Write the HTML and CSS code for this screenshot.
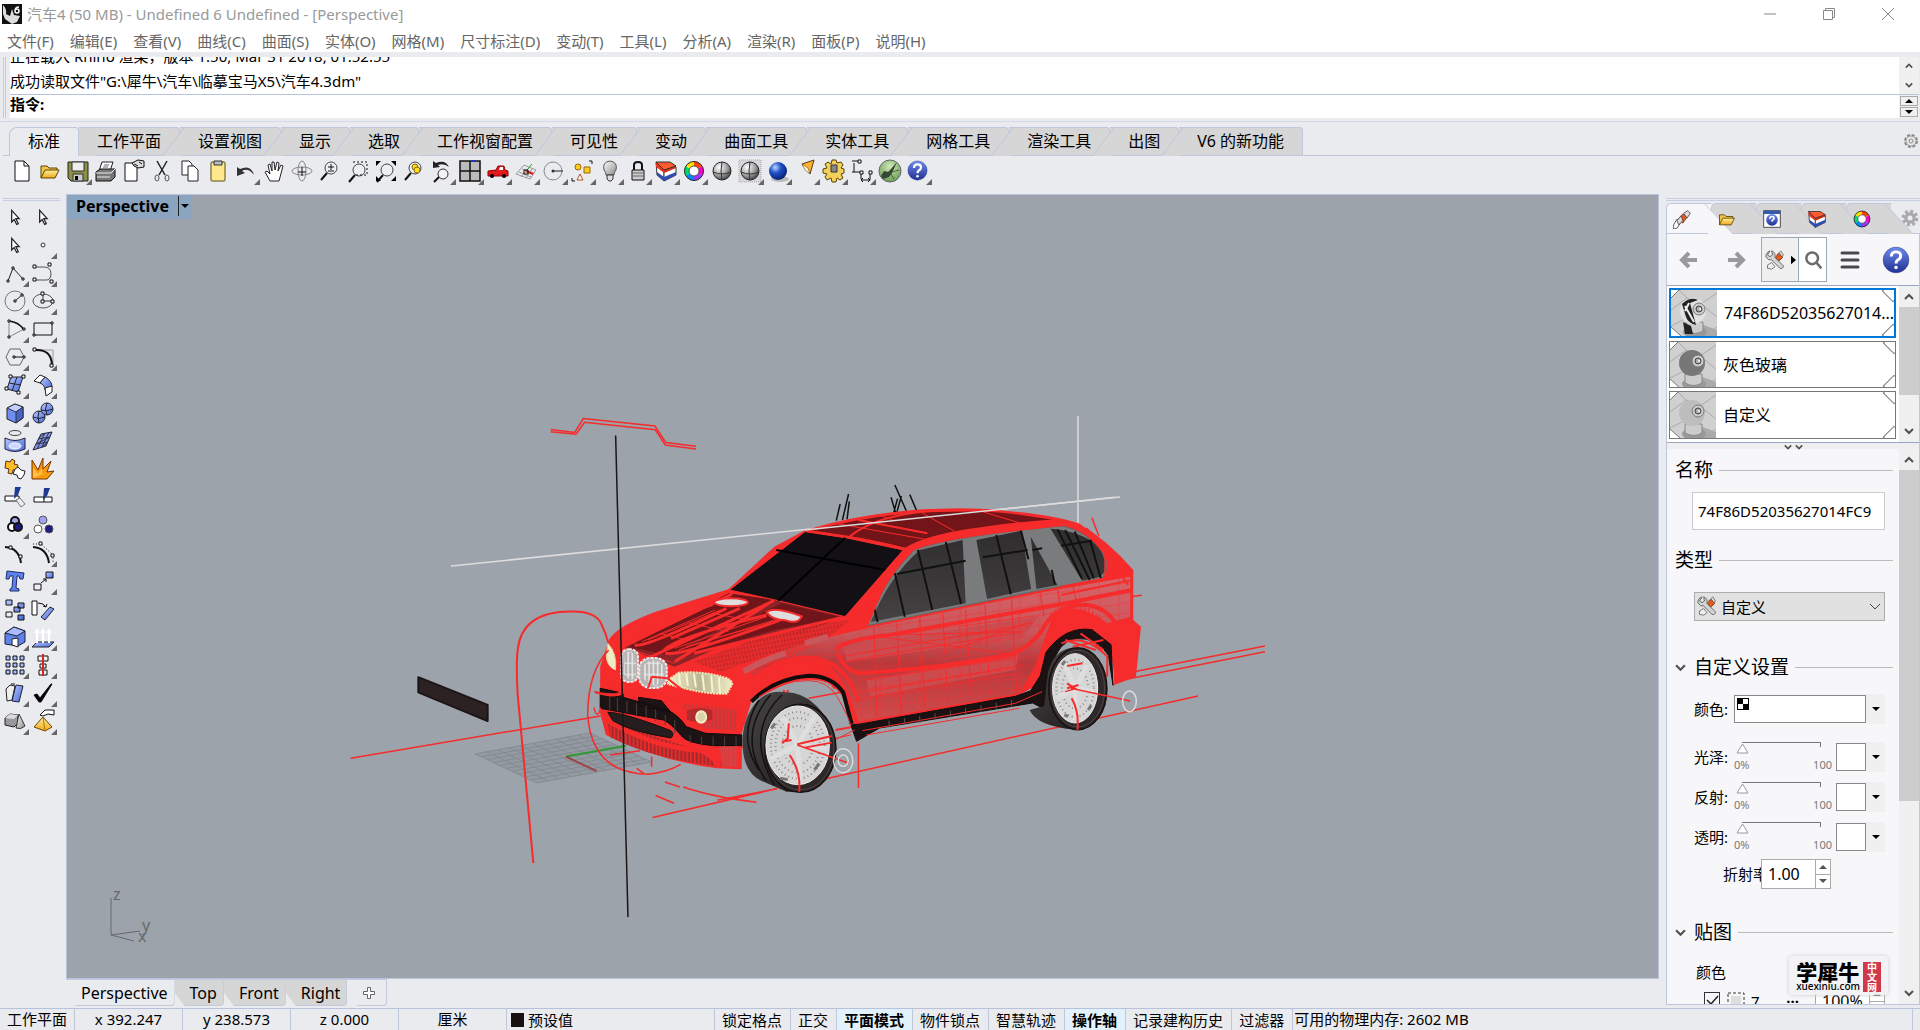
FILE: index.html
```html
<!DOCTYPE html>
<html lang="zh-CN">
<head>
    <meta charset="UTF-8">
    <meta name="viewport" content="width=device-width, initial-scale=1.0">
    <title>汽车4 (50 MB) - Undefined 6 Undefined - [Perspective]</title>
    <link rel="stylesheet" href="styles.css">
</head>
<body>
    <!-- общие символы и градиенты -->
    <svg class="defs" width="0" height="0" aria-hidden="true">
        <defs>
            <linearGradient id="blue" x1="0" y1="0" x2="1" y2="1"><stop offset="0" stop-color="#b9c9ff"/><stop offset="1" stop-color="#4667d8"/></linearGradient>
            <linearGradient id="gold" x1="0" y1="0" x2="0" y2="1"><stop offset="0" stop-color="#fff0a0"/><stop offset="1" stop-color="#f0a818"/></linearGradient>
            <linearGradient id="metal" x1="0" y1="0" x2="1" y2="1"><stop offset="0" stop-color="#fff"/><stop offset="1" stop-color="#8a8a8a"/></linearGradient>
            <radialGradient id="ball" cx=".35" cy=".3" r=".8"><stop offset="0" stop-color="#fff"/><stop offset=".5" stop-color="#aaa"/><stop offset="1" stop-color="#333"/></radialGradient>
            <radialGradient id="blueball" cx=".35" cy=".3" r=".8"><stop offset="0" stop-color="#bcd6ff"/><stop offset=".4" stop-color="#1e50c8"/><stop offset="1" stop-color="#031660"/></radialGradient>
            <linearGradient id="help" x1="0" y1="0" x2="0" y2="1"><stop offset="0" stop-color="#6e8cf0"/><stop offset="1" stop-color="#203090"/></linearGradient>
            <radialGradient id="green" cx=".5" cy=".3" r=".8"><stop offset="0" stop-color="#cfe8b8"/><stop offset="1" stop-color="#5c9048"/></radialGradient>
        </defs>
        <symbol id="arrow" viewBox="0 0 24 24"><path d="M8 4v14l3-3 3 6 2-1-3-6h4z" fill="#fff" stroke="#222" stroke-width="1.500"/></symbol>
        <symbol id="folder" viewBox="0 0 24 24"><path d="M3 19V7h6l2 2h8v4" fill="#f3c64a" stroke="#5b4300"/><path d="M3 19l4-8h14l-4 8z" fill="url(#gold)" stroke="#5b4300"/></symbol>
        <symbol id="layers" viewBox="0 0 24 24"><path d="M2 3l8 7v12l-7-6z" fill="#fff" stroke="#333"/><path d="M10 12l12-4v8l-12 6z" fill="#fff" stroke="#333"/><path d="M2 3l8 7v4L2 8z" fill="#e8351c"/><path d="M10 10l12-4v3l-12 5z" fill="#d82a18"/><path d="M2 3l14 0 6 4-12 4z" fill="#ff5a30" stroke="#333"/><path d="M3 13l7 5 12-5v3l-12 6-7-6z" fill="#2d4cb4"/></symbol>
        <symbol id="wheel" viewBox="0 0 24 24"><g fill="none" stroke-width="5"><path d="M12 5A7 7 0 0 1 18 8.500" stroke="#f40"/><path d="M18 8.500A7 7 0 0 1 18 15.500" stroke="#f0c"/><path d="M18 15.500A7 7 0 0 1 12 19" stroke="#93f"/><path d="M12 19A7 7 0 0 1 6 15.500" stroke="#08f"/><path d="M6 15.500A7 7 0 0 1 6 8.500" stroke="#0d6"/><path d="M6 8.500A7 7 0 0 1 12 5" stroke="#fd0"/></g><circle cx="12" cy="12" r="9.500" fill="none" stroke="#222"/><circle cx="12" cy="12" r="5" fill="#fff" stroke="#555"/></symbol>
        <symbol id="ask" viewBox="0 0 24 24"><circle cx="12" cy="12" r="11" fill="url(#help)" stroke="#27348a" stroke-width=".5"/><path d="M8 9q0-4 4-4t4 3.500q0 2-2.500 3.500-1.500 1-1.500 3" fill="none" stroke="#fff" stroke-width="2.500"/><circle cx="12" cy="18.500" r="1.500" fill="#fff"/></symbol>
        <symbol id="lens" viewBox="0 0 24 24"><path d="M9 14l-6 7" stroke="#111" stroke-width="2"/><circle cx="13" cy="9" r="6" fill="#eef2f4" fill-opacity=".7" stroke="#444"/></symbol>
        <symbol id="wrench" viewBox="0 0 24 24"><path d="M3 18l5-3 4 5-4 3-5-1z" fill="#eee" stroke="#666"/><path d="M19 1l3 5-3 5-5-5z" fill="#ddd" stroke="#666"/><path d="M13 8l4-4 4 5-4 4-4-3z" fill="#e65a1c" stroke="#7a2b08"/><path d="M6 1q-5 2-5 7 3 5 7 4l10 10q4 1 4-3L12 9Q13 3 8 1l1 5-3 2-3-2z" fill="#d4d4d6" stroke="#555"/></symbol>
        <symbol id="gear" viewBox="0 0 24 24"><circle cx="12" cy="12" r="8" fill="none" stroke-width="4" stroke-dasharray="3.600 2.680" stroke="currentColor"/><circle cx="12" cy="12" r="5" fill="none" stroke="currentColor" stroke-width="4"/></symbol>
        <symbol id="up" viewBox="0 0 10 10"><path d="M1 7l4-4 4 4" fill="none" stroke="#505050" stroke-width="2"/></symbol>
        <symbol id="down" viewBox="0 0 10 10"><path d="M1 3l4 4 4-4" fill="none" stroke="#505050" stroke-width="2"/></symbol>
        <symbol id="tri-up" viewBox="0 0 8 8"><path d="M0 6l4-4 4 4z"/></symbol>
        <symbol id="tri-down" viewBox="0 0 8 8"><path d="M0 2l4 4 4-4z"/></symbol>
        <symbol id="thumb" viewBox="0 0 46 46">
            <rect width="46" height="46" fill="#d0d0d0"/><path d="M0 20L16 8l14 6L46 3M0 36l12-6M30 14l16 13M34 46l12-9M8 0l8 8" stroke="#aaa" fill="none"/>
            <path d="M30 34l16 6v6H24z" fill="#aaa"/>
            <ellipse cx="24" cy="42" rx="12" ry="6" fill="#999"/><path d="M15 32h17v9q-8 5-17 0z" fill="#ccc" stroke="#888"/>
            <circle cx="22" cy="21" r="13" fill="currentColor"/>
            <circle cx="28" cy="19" r="6" fill="#ccc" stroke="#777"/><circle cx="28" cy="19" r="3" fill="#aaa" stroke="#444"/><circle cx="29" cy="19" r="1" fill="#fff"/>
            <path d="M0 0h8L0 8zM0 46h10L0 37z" fill="#fff"/><path d="M8 0L0 8M0 37l10 9" stroke="#777"/>
        </symbol>
    </svg>

    <header class="titlebar">
        <svg class="logo" viewBox="0 0 20 20"><rect width="20" height="20" fill="#111"/><path d="M1 1q4 4 3 9l4 2 2-7 2 6 6 1-3 6-5 2-7-5-2-5z" fill="#ddd"/><path d="M17 3q-4 0-4 4 0 2 2 2t2-2-2-2-2 1" fill="none" stroke="#fff" stroke-width="1.500"/></svg>
        <h1>汽车4 (50 MB) - Undefined 6 Undefined - [Perspective]</h1>
        <div class="window-buttons">
            <button aria-label="最小化"><svg viewBox="0 0 14 14"><path d="M1 7h12"/></svg></button>
            <button aria-label="还原"><svg viewBox="0 0 14 14"><path d="M1.500 3.500h9v9h-9zM3.500 3.500v-2h9v9h-2"/></svg></button>
            <button aria-label="关闭"><svg viewBox="0 0 14 14"><path d="M1 1l12 12M13 1L1 13"/></svg></button>
        </div>
    </header>

    <nav class="menu">
        <a href="#">文件(F)</a><a href="#">编辑(E)</a><a href="#">查看(V)</a><a href="#">曲线(C)</a><a href="#">曲面(S)</a><a href="#">实体(O)</a><a href="#">网格(M)</a><a href="#">尺寸标注(D)</a><a href="#">变动(T)</a><a href="#">工具(L)</a><a href="#">分析(A)</a><a href="#">渲染(R)</a><a href="#">面板(P)</a><a href="#">说明(H)</a>
    </nav>

    <section class="command">
        <div class="history">
            <div class="history-text">
                <p>正在载入 Rhino 渲染，版本 1.50, Mar 31 2018, 01:52:55</p>
                <p>成功读取文件"G:\犀牛\汽车\临摹宝马X5\汽车4.3dm"</p>
            </div>
            <div class="history-scroll"><svg><use href="#up"/></svg><svg><use href="#down"/></svg></div>
        </div>
        <div class="prompt">
            <label for="cmd">指令:</label>
            <input id="cmd" type="text">
            <div class="prompt-scroll">
                <button aria-label="上一条"><svg><use href="#tri-up"/></svg></button>
                <button aria-label="下一条"><svg><use href="#tri-down"/></svg></button>
            </div>
        </div>
    </section>

    <section class="toolbars">
        <div class="tabs">
            <button class="tab active">标准</button><button class="tab">工作平面</button><button class="tab">设置视图</button><button class="tab">显示</button><button class="tab">选取</button><button class="tab">工作视窗配置</button><button class="tab">可见性</button><button class="tab">变动</button><button class="tab">曲面工具</button><button class="tab">实体工具</button><button class="tab">网格工具</button><button class="tab">渲染工具</button><button class="tab">出图</button><button class="tab">V6 的新功能</button>
            <button class="tabs-gear" aria-label="选项"><svg viewBox="0 0 16 16"><circle cx="8" cy="8" r="6" fill="none" stroke="#888" stroke-width="2" stroke-dasharray="3 1.700"/><circle cx="8" cy="8" r="5" fill="#e8e8e8" stroke="#999"/><circle cx="8" cy="8" r="2" fill="none" stroke="#888"/></svg></button>
        </div>
        <div class="toolbar">
            <button class="tool" aria-label="新建"><svg viewBox="0 0 24 24"><path d="M5 2h9l5 5v15H5z" fill="#fff" stroke="#111"/><path d="M14 2v5h5" fill="none" stroke="#111"/></svg></button>
            <button class="tool" aria-label="打开"><svg><use href="#folder"/></svg></button>
            <button class="tool more" aria-label="保存"><svg viewBox="0 0 24 24"><path d="M2 3h20v19H5l-3-3z" fill="#8d8f45" stroke="#222"/><path d="M6 3h12v9H6z" fill="#eee" stroke="#333"/><path d="M7 15h10v7H7z" fill="#ccc" stroke="#333"/><path d="M9 17h3v4H9z"/></svg></button>
            <button class="tool" aria-label="打印"><svg viewBox="0 0 24 24"><path d="M8 3h11l-3 9H5z" fill="#fff" stroke="#222"/><path d="M2 13l4-3h15v8l-4 4H2z" fill="#777" stroke="#111"/><path d="M2 14h15l4-4M3 18h13" stroke="#eee" fill="none"/><path d="M10 6h5M9 8h5" stroke="#666"/></svg></button>
            <button class="tool" aria-label="属性"><svg viewBox="0 0 24 24"><path d="M3 4h12v18H3z" fill="#fff" stroke="#111"/><path d="M10 4l6-3 6 1v6l-6 1-4-2z" fill="#ddd" stroke="#111"/><path d="M12 5l4 2M17 3l3 2" stroke="#111"/></svg></button>
            <button class="tool" aria-label="剪切"><svg viewBox="0 0 24 24"><path d="M7 2l8 14M17 2L9 16" stroke="#222" stroke-width="1.500"/><ellipse cx="7" cy="19" rx="2" ry="3" fill="none" stroke="#555"/><ellipse cx="17" cy="19" rx="2" ry="3" fill="none" stroke="#555"/></svg></button>
            <button class="tool" aria-label="复制"><svg viewBox="0 0 24 24"><path d="M4 2h7l3 3v11H4z" fill="#fff" stroke="#222"/><path d="M10 7h6l4 4v11H10z" fill="#fff" stroke="#222"/></svg></button>
            <button class="tool" aria-label="粘贴"><svg viewBox="0 0 24 24"><rect x="5" y="3" width="14" height="19" rx="1" fill="#ffe98c" stroke="#5c4a10"/><path d="M8 2h8v4H8z" fill="#bbb" stroke="#333"/></svg></button>
            <button class="tool more" aria-label="撤销"><svg viewBox="0 0 24 24"><path d="M3 8v9l8-3-3-2q6-4 12 4-3-11-14-6z" fill="#333"/></svg></button>
            <button class="tool" aria-label="平移"><svg viewBox="0 0 24 24"><path d="M8 22l-5-9 2-1 3 3-2-9 2-1 2 7V3h2l1 8 2-8 2 1-1 8 3-6 2 1-4 15z" fill="#fff" stroke="#222"/></svg></button>
            <button class="tool" aria-label="旋转"><svg viewBox="0 0 24 24"><g fill="none" stroke="#888"><ellipse cx="12" cy="12" rx="10" ry="4"/><ellipse cx="12" cy="12" rx="4" ry="10"/></g><path d="M8 13h8M12 8v9" stroke="#111"/></svg></button>
            <button class="tool" aria-label="缩放"><svg viewBox="0 0 24 24"><use href="#lens"/><path d="M10 8h6M13 5v6M10 12h6" stroke="#111"/></svg></button>
            <button class="tool" aria-label="框选缩放"><svg viewBox="0 0 24 24"><use href="#lens" y="2"/><path d="M7 3h14v13H8" fill="none" stroke="#111" stroke-dasharray="2 2"/></svg></button>
            <button class="tool" aria-label="缩放至最大"><svg viewBox="0 0 24 24"><use href="#lens" y="2"/><path d="M2 2h5L2 7zM22 2v5l-5-5zM22 22v-5l-5 5zM2 22v-5l5 5z"/></svg></button>
            <button class="tool" aria-label="缩放选取"><svg viewBox="0 0 24 24"><use href="#lens"/><circle cx="13" cy="8" r="3" fill="#fd2" stroke="#860"/><circle cx="15" cy="11" r="3" fill="#fd2" stroke="#860"/></svg></button>
            <button class="tool more" aria-label="还原视图"><svg viewBox="0 0 24 24"><circle cx="13" cy="15" r="5" fill="#f4f4f4" stroke="#333"/><path d="M9 18l-5 5" stroke="#111" stroke-width="2"/><path d="M3 2v7l7-1-2-2q6-2 11 2-4-8-13-4z" fill="#222"/></svg></button>
            <button class="tool more" aria-label="四视图"><svg viewBox="0 0 24 24"><path d="M2 2h20v20H2zM12 2v20M2 12h20" fill="#bbb" stroke="#111" stroke-width="1.500"/><path d="M13 2h5" stroke="#23c" stroke-width="2"/></svg></button>
            <button class="tool more" aria-label="车"><svg viewBox="0 0 24 24"><path d="M2 12l8-1 2-4h6l1 4 3 1v5H2z" fill="#e01c1c" stroke="#900"/><path d="M13 11l1-3h3v3z" fill="#fff"/><circle cx="6" cy="17" r="2"/><circle cx="18" cy="17" r="2"/></svg></button>
            <button class="tool more" aria-label="工作平面"><svg viewBox="0 0 24 24"><path d="M2 15l8-9 12 5-6 9zM5 13l12 5M8 10l12 4M7 18l8-9M12 19l6-9" fill="none" stroke="#999"/><path d="M12 12l7 3" stroke="#d22" stroke-width="2"/><path d="M12 12l6-7" stroke="#2a2"/><path d="M10 11h4v4h-4z" fill="none" stroke="#111"/></svg></button>
            <button class="tool more" aria-label="圆"><svg viewBox="0 0 24 24"><circle cx="11" cy="12" r="9" fill="none" stroke="#888"/><path d="M10 12h11" stroke="#222"/><circle cx="11" cy="12" r="1.500" fill="#333"/></svg></button>
            <button class="tool more" aria-label="选取物件"><svg viewBox="0 0 24 24"><circle cx="8" cy="8" r="3" fill="#fc2" stroke="#960"/><path d="M14 8h6v6h-6z" fill="#fc2" stroke="#960"/><path d="M10 15l3 6H7z" fill="#fff" stroke="#a52"/><path d="M19 2h3v3M2 19v3h3" fill="none" stroke="#111"/></svg></button>
            <button class="tool more" aria-label="隐藏"><svg viewBox="0 0 24 24"><path d="M8 16q0-3-2-5-2-8 6-9 8 1 6 9-2 2-2 5z" fill="url(#metal)" stroke="#555"/><path d="M9 16h6v4l-2 2h-2l-2-2z" fill="#ddd" stroke="#333"/></svg></button>
            <button class="tool more" aria-label="锁定"><svg viewBox="0 0 24 24"><path d="M8 11V6q0-3 4-3t4 3v5" fill="none" stroke="#111" stroke-width="2"/><path d="M6 11h12v10H6z" fill="#ccc" stroke="#111"/><path d="M7 14h10M7 17h10" stroke="#666"/></svg></button>
            <button class="tool more" aria-label="图层"><svg><use href="#layers"/></svg></button>
            <button class="tool more" aria-label="颜色"><svg><use href="#wheel"/></svg></button>
            <button class="tool" aria-label="着色"><svg viewBox="0 0 24 24"><circle cx="12" cy="12" r="9" fill="url(#ball)" stroke="#222"/><path d="M3 13q9 4 18 0M12 3q-2 9 0 18" fill="none" stroke="#333"/></svg></button>
            <button class="tool more" aria-label="着色模式"><svg viewBox="0 0 24 24"><path d="M1 1h22v22H1z" fill="#d8d8da" stroke="#aaa" stroke-dasharray="1 1"/><circle cx="12" cy="12" r="9" fill="url(#ball)" stroke="#222"/><path d="M3 13q9 4 18 0M12 3q-2 9 0 18" fill="none" stroke="#333"/></svg></button>
            <button class="tool more" aria-label="渲染"><svg viewBox="0 0 24 24"><ellipse cx="14" cy="20" rx="9" ry="3" fill="#bbb"/><circle cx="12" cy="12" r="9" fill="url(#blueball)"/></svg></button>
            <button class="tool more" aria-label="灯光"><svg viewBox="0 0 24 24"><path d="M8 5l12-4-4 14z" fill="#ffb030" stroke="#543a10"/><path d="M8 5l3 6 5 4-2-6z" fill="#fff3c0" stroke="#543a10" stroke-width=".5"/></svg></button>
            <button class="tool more" aria-label="选项"><svg viewBox="0 0 24 24"><g stroke="#5c4100" fill="#f3d05c"><path d="M10 1h4l1 3 4-1 2 3-2 3 3 1v4l-3 1 2 4-3 2-3-2-1 4h-4l-1-4-4 2-2-3 2-3-4-1v-4l4-1-2-4 3-2 3 2z"/></g><path d="M9 6h6v7H9z" fill="#888" stroke="#333"/></svg></button>
            <button class="tool more" aria-label="尺寸"><svg viewBox="0 0 24 24"><path d="M2 2h8M4 4v9M2 13h9v7M20 13v8M11 21h9M13 19l-2 2 2 2M18 19l2 2-2 2" fill="none" stroke="#111"/><path d="M8 1h3v3H8zM10 12h3v3h-3zM19 12h3v3h-3z" fill="#fff" stroke="#111"/></svg></button>
            <button class="tool" aria-label="Grasshopper"><svg viewBox="0 0 24 24"><circle cx="12" cy="12" r="11" fill="url(#green)" stroke="#666"/><path d="M3 17l3-5 4 1 3-3 6-7-5 11-3 4-6 2z" fill="#354530"/><path d="M14 13l7-2M13 15l3 5" stroke="#476038"/></svg></button>
            <button class="tool more" aria-label="说明"><svg viewBox="0 0 24 24"><use href="#ask" x="1" y="1" width="21" height="21"/></svg></button>
        </div>
    </section>

    <main class="workspace">
        <aside class="side-tools">
            <button class="tool" aria-label="选取"><svg><use href="#arrow"/></svg></button>
            <button class="tool" aria-label="选取点"><svg><use href="#arrow"/></svg></button>
            <button class="tool" aria-label="子物件"><svg><use href="#arrow"/></svg></button>
            <button class="tool more" aria-label="点"><svg viewBox="0 0 24 24"><circle cx="12" cy="12" r="2" fill="#fff" stroke="#333"/></svg></button>
            <button class="tool more" aria-label="多重直线"><svg viewBox="0 0 24 24"><path d="M5 20l5-13 10 11" fill="none" stroke="#222"/><path d="M4 19h2v2H4zM9 6h2v2H9zM19 17h2v2h-2z" fill="#fff" stroke="#111"/></svg></button>
            <button class="tool more" aria-label="曲线"><svg viewBox="0 0 24 24"><path d="M4 6h9q7 0 7 7t-7 6H4" fill="none" stroke="#555"/><path d="M2 4h3v3H2zM17 2h3v3h-3zM2 17h3v3H2zM19 19h3v3h-3z" fill="#fff" stroke="#111"/></svg></button>
            <button class="tool more" aria-label="圆形"><svg viewBox="0 0 24 24"><circle cx="12" cy="12" r="10" fill="none" stroke="#777"/><path d="M12 12l7-6" stroke="#222"/><path d="M11 11h2v2h-2zM18 5h2v2h-2z" fill="#fff" stroke="#111"/></svg></button>
            <button class="tool more" aria-label="椭圆"><svg viewBox="0 0 24 24"><ellipse cx="12" cy="12" rx="10" ry="7" fill="none" stroke="#555"/><path d="M12 5v7h9" fill="none" stroke="#333"/><path d="M10 3h3v3h-3zM10 11h3v3h-3zM20 11h3v3h-3z" fill="#fff" stroke="#111"/></svg></button>
            <button class="tool more" aria-label="圆弧"><svg viewBox="0 0 24 24"><path d="M6 4q10 1 15 9" fill="none" stroke="#111" stroke-width="1.500"/><path d="M6 4v16l15-8" fill="none" stroke="#888"/><path d="M5 3h2v2H5zM5 19h2v2H5zM20 11h2v2h-2z" fill="#fff" stroke="#111"/></svg></button>
            <button class="tool more" aria-label="矩形"><svg viewBox="0 0 24 24"><path d="M3 6h18v12H3z" fill="none" stroke="#111"/><path d="M20 5h2v2h-2zM2 17h2v2H2z" fill="#fff" stroke="#111"/></svg></button>
            <button class="tool more" aria-label="多边形"><svg viewBox="0 0 24 24"><path d="M7 4h10l4 8-4 8H7l-4-8z" fill="none" stroke="#666"/><path d="M12 12h9" stroke="#111"/><path d="M10 11h2v2h-2zM20 11h2v2h-2z" fill="#fff" stroke="#111"/></svg></button>
            <button class="tool more" aria-label="圆角"><svg viewBox="0 0 24 24"><path d="M4 5h18v16" fill="none" stroke="#999"/><path d="M4 5q17-1 17 16" fill="none" stroke="#111" stroke-width="2"/><path d="M2 3h3v3H2zM19 19h3v3h-3z" fill="#fff" stroke="#111"/></svg></button>
            <button class="tool more" aria-label="曲面"><svg viewBox="0 0 24 24"><path d="M8 4h12l-5 15-11-3z" fill="url(#blue)" stroke="#223"/><path d="M6 10l12 2M14 4l-5 14" stroke="#223"/><path d="M6 2h3v3H6zM19 2h3v3h-3zM2 14h3v3H2zM14 18h3v3h-3z" fill="#fff" stroke="#111"/></svg></button>
            <button class="tool more" aria-label="放样"><svg viewBox="0 0 24 24"><path d="M3 8l6-6 5 2-5 6z" fill="#fff" stroke="#222"/><path d="M9 10l5-6q7 4 7 10l-7 3q0-5-5-7z" fill="url(#blue)" stroke="#223"/><path d="M14 15l7-2v6l-6 4z" fill="#fff" stroke="#222"/></svg></button>
            <button class="tool more" aria-label="立方体"><svg viewBox="0 0 24 24"><path d="M4 7l8-4 8 3v11l-7 5-9-4z" fill="#6f8ff0" stroke="#222"/><path d="M4 7l8-4 8 3-7 5z" fill="#c3cfff" stroke="#333"/><path d="M13 11v11l7-5V6z" fill="#4562cc" stroke="#333"/></svg></button>
            <button class="tool more" aria-label="球体"><svg viewBox="0 0 24 24"><circle cx="8" cy="16" r="6" fill="url(#blue)" stroke="#223"/><circle cx="16" cy="8" r="6" fill="url(#blue)" stroke="#223"/><path d="M10 9q6 2 12-1M16 2q-3 6 0 12M2 16q6 3 12 0M8 10q-2 6 0 12" fill="none" stroke="#223"/></svg></button>
            <button class="tool more" aria-label="投影"><svg viewBox="0 0 24 24"><ellipse cx="12" cy="4" rx="6" ry="2.500" fill="none" stroke="#444"/><path d="M2 9q10 5 20 0v11q-10 5-20 0z" fill="url(#blue)" stroke="#223"/><ellipse cx="12" cy="17" rx="6" ry="3" fill="#cdd8ff" stroke="#fff"/></svg></button>
            <button class="tool more" aria-label="网格"><svg viewBox="0 0 24 24"><path d="M10 5l11-2-6 14-13 4z" fill="url(#blue)" stroke="#223"/><path d="M7 10l12-2M5 15l12-2M14 4L6 20M18 3l-7 15M7 10l7-6M5 15l14-7M11 18l6-5" fill="none" stroke="#334"/></svg></button>
            <button class="tool" aria-label="组合"><svg viewBox="0 0 24 24"><path d="M3 4l4 1 2-3 3 2-1 3 4 1-1 4-4 1-1 4-4-1 1-4-4-1z" fill="#fb2" stroke="#532"/><path d="M12 12l3-2 3 3 4 1-1 4-3 4-3-1-1-3-4-1z" fill="#fff" stroke="#222"/></svg></button>
            <button class="tool" aria-label="炸开"><svg viewBox="0 0 24 24"><path d="M1 22V3l6 10L12 1v11l8-8-4 11 7-1-7 8z" fill="#f79a10" stroke="#7a3300"/><path d="M2 21V11l5 6 4-6v7l5-3z" fill="#ffc04a"/></svg></button>
            <button class="tool" aria-label="修剪"><svg viewBox="0 0 24 24"><path d="M2 11h14v5H2z" fill="#fff" stroke="#111"/><path d="M12 2h6l-3 8-4 4z" fill="#1f3a93"/><path d="M13 15l4-2 5 6-4 3z" fill="#eee" stroke="#777"/></svg></button>
            <button class="tool" aria-label="分割"><svg viewBox="0 0 24 24"><path d="M3 12h18v5H3z" fill="#fff" stroke="#111"/><path d="M13 3h6l-3 8-4 4z" fill="#1f3a93"/><path d="M13 12v5" stroke="#111"/></svg></button>
            <button class="tool more" aria-label="群组"><svg viewBox="0 0 24 24"><g stroke="#111" stroke-width="2"><circle cx="12" cy="8" r="4" fill="#a0a4ee"/><circle cx="9" cy="14" r="4" fill="#fff"/><circle cx="15" cy="14" r="4" fill="#1c1c80"/></g></svg></button>
            <button class="tool" aria-label="解散群组"><svg viewBox="0 0 24 24"><g stroke="#555"><circle cx="12" cy="7" r="4" fill="#a0a4ee"/><circle cx="7" cy="16" r="4" fill="#fff"/><circle cx="18" cy="16" r="4" fill="#1c1c80"/></g></svg></button>
            <button class="tool" aria-label="编辑点"><svg viewBox="0 0 24 24"><path d="M2 6q14 1 16 16" fill="none" stroke="#111" stroke-width="2"/><path d="M6 5h3v3H6zM16 14h3v3h-3z" fill="#fff" stroke="#111"/></svg></button>
            <button class="tool more" aria-label="控制点"><svg viewBox="0 0 24 24"><path d="M2 6q14 1 16 16" fill="none" stroke="#111" stroke-width="2"/><path d="M2 3h8l12 11v7" fill="none" stroke="#111" stroke-dasharray="1 2"/><path d="M8 1h3v3H8zM20 13h3v3h-3z" fill="#fff" stroke="#111"/></svg></button>
            <button class="tool" aria-label="文字"><svg viewBox="0 0 24 24"><path d="M4 2l17 2-1 6h-3l-1-3h-2l-1 12 3 1v2H7v-2l2-1 1-12H7l-1 3H3z" fill="#5f82ea" stroke="#1c2c68"/></svg></button>
            <button class="tool more" aria-label="移动"><svg viewBox="0 0 24 24"><path d="M15 3h7v6h-7z" fill="url(#blue)" stroke="#111"/><path d="M3 15h7v6H3z" fill="#eee" stroke="#111"/><path d="M10 14l5-4M12 10h3v3" fill="none" stroke="#111"/></svg></button>
            <button class="tool" aria-label="复制物件"><svg viewBox="0 0 24 24"><g fill="url(#blue)" stroke="#111"><path d="M3 3h6v5H3zM15 6h6v5h-6zM11 10h6v5h-6zM15 18h6v5h-6z"/></g><path d="M3 15h6v5H3z" fill="#eee" stroke="#111"/></svg></button>
            <button class="tool" aria-label="旋转物件"><svg viewBox="0 0 24 24"><path d="M1 4h5v14H1z" fill="#fff" stroke="#111"/><path d="M10 20l9-10 4 2-9 11z" fill="url(#blue)" stroke="#223"/><path d="M7 6q6 0 8 4M12 9l3 1 1-3" fill="none" stroke="#111"/></svg></button>
            <button class="tool more" aria-label="布尔"><svg viewBox="0 0 24 24"><path d="M2 8l9-6 11 4v11l-7 4-13-2z" fill="#5f82ea" stroke="#223"/><path d="M2 8l9-6 11 4-8 5z" fill="#a9bcff" stroke="#223"/><path d="M9 14l6-1v9l-6-2z" fill="#fff" stroke="#222"/></svg></button>
            <button class="tool more" aria-label="挤出"><svg viewBox="0 0 24 24"><path d="M6 17h17l-5 5H1z" fill="url(#blue)" stroke="#223"/><path d="M6 18V6M12 18V6M18 18V6M4 8l2-3 2 3M10 8l2-3 2 3M16 8l2-3 2 3" fill="none" stroke="#fff" stroke-width="2"/></svg></button>
            <button class="tool more" aria-label="阵列"><svg viewBox="0 0 24 24"><path d="M3 3h4v4H3zM10 3h4v4h-4zM17 3h4v4h-4zM3 10h4v4H3zM10 10h4v4h-4zM17 10h4v4h-4zM3 17h4v4H3zM10 17h4v4h-4zM17 17h4v4h-4z" fill="#a9bcff" stroke="#111"/></svg></button>
            <button class="tool more" aria-label="对齐"><svg viewBox="0 0 24 24"><path d="M7 3h10v5H7zM9 11h6v4H9zM8 17h8v5H8z" fill="#eee" stroke="#111"/><path d="M12 1v22" stroke="#d22" stroke-width="2"/></svg></button>
            <button class="tool more" aria-label="弯曲"><svg viewBox="0 0 24 24"><path d="M3 8l4-4 5 1-3 14-5 1z" fill="#eee" stroke="#222"/><path d="M13 4l7 1-4 16-7-1z" fill="url(#blue)" stroke="#223"/><path d="M8 3h4" stroke="#111"/></svg></button>
            <button class="tool more" aria-label="检查"><svg viewBox="0 0 24 24"><path d="M3 14l3-1 3 4L20 3h1L10 21H8z" stroke="#111"/></svg></button>
            <button class="tool more" aria-label="实体"><svg viewBox="0 0 24 24"><path d="M2 9l5-4 8 1v8l-4 4-9-2z" fill="#999" stroke="#222"/><path d="M2 9l5-4 8 1-4 4z" fill="#ddd"/><path d="M16 5l6 12q-4 4-9 2z" fill="url(#metal)" stroke="#333"/></svg></button>
            <button class="tool more" aria-label="拾取"><svg viewBox="0 0 24 24"><path d="M12 8l9 10-7 4-11-4z" fill="url(#gold)" stroke="#6a4500"/><path d="M12 8l2 14" stroke="#a70"/><path d="M9 6l5-5h9v5l-6-1-5 2z" fill="#fff" stroke="#111"/></svg></button>
        </aside>

        <section class="view">
            <div class="viewport">
                <svg class="scene" viewBox="67 195 1591 784" preserveAspectRatio="xMinYMin slice" role="img" aria-label="汽车">
                    <defs>
                        <pattern id="mesh" width="52" height="30" patternUnits="userSpaceOnUse" patternTransform="skewY(-9)"><path d="M3 0l4 30M0 4h52" stroke="#f62b2b" stroke-width="2" fill="none"/></pattern>
                        <pattern id="fine" width="9" height="13" patternUnits="userSpaceOnUse" patternTransform="rotate(-12)"><path d="M0 2h9M2 0v13" stroke="#f62b2b" stroke-width="3" fill="none"/></pattern>
                        <pattern id="ribs" width="10" height="80" patternUnits="userSpaceOnUse"><path d="M2 0v80" stroke="#f62b2b" stroke-width="4"/></pattern>
                        <pattern id="slats" width="11" height="34" patternUnits="userSpaceOnUse"><path d="M2 0v34M0 6h11" stroke="#e9e9e9" stroke-width="4"/></pattern>
                        <linearGradient id="side" x1="0" y1="0" x2="0" y2="1"><stop offset="0" stop-color="#d76469"/><stop offset=".4" stop-color="#c9565a"/><stop offset=".6" stop-color="#b8383b"/><stop offset="1" stop-color="#d04c4d"/></linearGradient>
                        <linearGradient id="tire" x1="0" y1="0" x2="1" y2="1"><stop offset="0" stop-color="#484647"/><stop offset="1" stop-color="#1c1717"/></linearGradient>
                        <linearGradient id="lamp"><stop offset="0" stop-color="#f4f0cc"/><stop offset=".5" stop-color="#b9b695"/><stop offset="1" stop-color="#efebc5"/></linearGradient>
                        <linearGradient id="glass" x1="0" y1="0" x2="0" y2="1"><stop offset="0" stop-color="#2e2c2d"/><stop offset="1" stop-color="#454243"/></linearGradient>
                    </defs>

                    <!-- сетка и вспомогательные кривые -->
                    <g transform="translate(340 400) scale(.3333 .338)" fill="none">
                        <path d="M405 1047l345-62 185 86-345 62z" fill="#949aa1"/>
                        <path transform="matrix(34.500 -6.200 18.500 8.600 405 1047)" stroke="#858b92" d="M0 0H10M0 1H10M0 2H10M0 3H10M0 4H10M0 5H10M0 6H10M0 7H10M0 8H10M0 9H10M0 10H10M0 0V10M1 0V10M2 0V10M3 0V10M4 0V10M5 0V10M6 0V10M7 0V10M8 0V10M9 0V10M10 0V10"/>
                        <path d="M678 1055l180-32" stroke="#2d9b34" stroke-width="2"/><path d="M678 1055l92 43" stroke="#9c4248" stroke-width="2"/>
                        <path d="M235 820l208 82v48l-208-85z" fill="#2c2223" stroke="#1c1515" stroke-linejoin="round" stroke-width="2"/>
                        <g stroke="#f62b2b">
                            <path stroke-width="1.500" d="M632 87l72 9 26-41 215 22 33 49 90 11M632 94l76 7 26-35 212 22 30 45 92 12"/>
                            <path d="M580 1370L533 870Q528 780 533 740 545 625 695 626 770 625 785 665 800 695 806 722" stroke-width="2"/>
                            <path stroke-width="1.500" d="M32 1060l750-125M938 1235l372-85M975 1130l45 15M1030 1145q90 30 220 45M947 1170l55 23M1132 1184l180-34M810 1050l90-12M935 1055v30"/>
                        </g>
                    </g>
                    <path d="M451 566L1120 497M1078 416v112" stroke="#dcdcdc" stroke-width="1.500" fill="none"/>

                    <g transform="translate(560 480) scale(.3827 .3333)">
                        <g fill="none" stroke="#f62b2b" stroke-width="1.500">
                            <path d="M680 900L1667 648M1500 575l342-77M1480 598l362-83M780 790v134M650 655l85-18M1390 113l18 56M1490 350l30-4"/>
                        </g>
                        <path d="M722 122l10-50M738 120l16-78M750 118l6-54M865 52l12 46M875 15l30 78M914 44l18 48M872 98l10-42M880 98l12-50" stroke="#111" stroke-width="1.500" fill="none"/>

                        <!-- кузов -->
                        <path fill="#f62b2b" d="M105 560L128 480Q145 440 250 395L440 328 560 200 638 152Q750 110 900 92 1060 78 1160 92 1290 105 1355 130 1430 180 1498 270V420l20 20-13 150-57 25Q1450 500 1400 460 1340 435 1295 490 1270 560 1240 620L1190 650 765 735Q750 640 700 608 630 580 540 640L500 665 475 760V868L410 865Q250 840 120 765L105 700z"/>
                        <path fill="#8b2428" d="M165 500L280 435 450 342 560 360 740 410 640 455 420 500 300 560z"/>
                        <path fill="#701519" d="M180 500L440 340 570 362 280 525zM300 520L580 370 735 412 560 450 350 520z"/>
                        <path fill="url(#side)" d="M500 560L600 500 800 445 1270 335 1490 290V410L1430 430Q1350 360 1290 400L1240 560 1200 640 780 725Q750 590 690 545 600 520 500 600z"/>
                        <path fill="url(#mesh)" opacity=".6" d="M560 520L800 445 1270 335 1490 290V410L1430 430Q1350 360 1290 400L1240 560 1200 640 780 725Q750 590 690 545 640 530 560 560z"/>
                        <path fill="#a8282b" opacity=".65" d="M350 545L580 450 760 420 700 470 560 520 420 575z"/><path fill="url(#fine)" d="M350 545L580 450 760 420 700 470 480 610 430 590z"/>
                        <path fill="none" stroke="#c9585c" stroke-width="6" d="M480 575Q540 535 590 520M640 490l60-20"/>
                        <path fill="url(#ribs)" opacity=".8" d="M585 545q60-30 110 30l40 60-30-20q-60-40-120-15zM1280 400q70-70 140 20v40q-60-50-120 10zM1450 470l60-20-8 130-54 30z"/>
                        <path fill="#cb4b4f" d="M740 500L1250 410 1210 470 750 545zM800 600l400-80-10 50-380 80z"/>
                        <path fill="url(#mesh)" d="M800 600l400-80-10 50-380 80zM1040 420l210-30-40 80-170 30z"/>
                        <g fill="none" stroke="#f62b2b">
                            <path stroke-width="4" d="M720 510Q740 480 860 465L1300 375 1495 330M725 520q20 55 60 60 250-20 405-60 60-40 80-90 40-60 110-55 50 10 75 60"/>
                            <path d="M740 545l470-90M735 530l500-100M870 465l330-10M1000 520l230-95M830 470l340 50M780 640l430-85M820 440l8 270M880 430l12 270M940 415l14 270M1000 400l14 270M1060 390l16 270M1110 375l14 270M1180 360l14 290M1255 340l10 70M1300 330l8 50M1340 320l12 50M800 600l390-70M790 655l410-75"/>
                            <path stroke-width="4" d="M500 600q90-80 170-65 80 20 110 130M590 545q80-20 130 80"/>
                            <path stroke-width="3" d="M165 500L450 342M190 490Q200 460 400 372M195 495q25 10 240-110M270 515Q280 480 540 405M275 520q40 10 300-100M290 475L470 385M300 545L560 360M350 520L740 412M220 540L560 362"/>
                            <path d="M215 485l190-95M230 480l190-90M300 505l240-95M310 510l250-90M330 500l260-85M160 500l140 50M400 400l90 20M340 430l100 25M260 460l70 20"/>
                        </g>
                        <g fill="#dedede" stroke="#f62b2b" stroke-width="2"><ellipse cx="447" cy="367" rx="44" ry="12"/><path d="M540 397q20-20 92 12-10 25-42 12-35 0-50-24z"/></g>

                        <!-- стёкла и крыша -->
                        <path fill="#721418" stroke="#f62b2b" stroke-width="2" d="M645 153Q760 115 900 98 1080 85 1180 98L1310 120Q1180 130 1100 145 960 165 900 208L750 172z"/>
                        <path fill="none" stroke="#f62b2b" d="M720 130l245 50M840 108l30 12M945 98l85 55M1095 92l110 38"/>
                        <path fill="none" stroke="#f62b2b" stroke-width="2" d="M755 172q60-60 200-78M960 160l-180-40M640 152q150 20 265 55"/>
                        <path fill="#121014" stroke="#f62b2b" d="M640 155L750 174 897 210 745 410 570 362 443 330z"/>
                        <path fill="none" stroke="#000" stroke-width="2" d="M565 210l285 60M745 174L570 362"/>
                        <path fill="#797b7d" stroke="#676767" d="M802 437Q840 310 925 210 990 180 1200 150L1310 138Q1390 155 1430 245 1432 290 1405 302L1300 320z"/>
                        <path fill="url(#glass)" d="M812 426Q860 290 940 210L1052 180 1060 370zM1088 180l118-28 25 175-115 30zM1230 170l70 145-55 12zM1282 146q60 5 105 35 45 40 35 95-8 15-20 17l-38 9z"/>
                        <path fill="none" stroke="#111" stroke-width="2" d="M880 282l180-40M1105 232l117-22M1235 210l25-5M1310 197l80-15M1008 186l40 185M935 210l38 180M875 280l26 130M820 380l10 46M1140 165l38 178M1204 150l20 88M1285 270l8 44M1300 148l64 148M1320 150l64 150M1345 155l50 140M1385 180l28 115"/>
                        <path fill="none" stroke="#f62b2b" stroke-width="5" d="M745 412L800 430 838 330Q870 260 920 205 990 170 1200 145L1320 130 1360 140"/>
                        <path fill="none" stroke="#f62b2b" stroke-width="2" d="M755 405L900 210M770 410L850 290M1375 145l115 130M1390 165l95 150M1430 280l65-10M1430 235l50 50M1425 220v70M1310 320l185-40M1310 345l185-45"/>
                        <path stroke="#dcdcdc" fill="none" stroke-width="1.500" d="M640 150L1450 52"/>

                        <!-- передок -->
                        <path fill="#f0ecc4" stroke="#d8cf95" d="M125 490q25 30 20 80-22-10-24-40z"/>
                        <g fill="#b8b4b4" stroke="#eaeaea" stroke-width="2" stroke-dasharray="3 1"><rect x="160" y="508" width="44" height="98" rx="20"/><rect x="207" y="534" width="72" height="90" rx="30"/></g>
                        <path fill="url(#slats)" d="M170 520q20-15 28 15v55l-14 12-18-20zM216 560q30-40 55 0v30l-20 30-30-20z"/>
                        <path fill="url(#lamp)" stroke="#ece7b5" stroke-width="2" stroke-dasharray="2 1" d="M282 600l28-22q70-5 120 15 20 5 20 20l-14 28Q380 645 282 612z"/>
                        <path fill="none" stroke="#f7f3cb" stroke-width="2" d="M310 580l4 35M330 580l4 38M350 582l5 40M372 584l5 48M395 587l4 50M415 592l3 48"/>
                        <path fill="#c33a3d" d="M320 670l145 20v60l-90-5-45-40z"/><path fill="url(#ribs)" d="M320 660h150v100H350z"/><path fill="#a22a2d" d="M125 725l220 80 70 40 10 15Q250 840 130 770z"/><path fill="url(#ribs)" d="M125 725l220 80 70 40 10 15Q250 840 130 770z"/>
                        <path fill="none" stroke="#f62b2b" stroke-width="5" d="M115 715q130 90 250 95 35 15 50 50"/>
                        <path fill="#d24347" d="M415 790h50v70h-40z"/><path fill="url(#ribs)" opacity=".5" d="M415 780h50v80h-50z"/>
                        <path fill="#1c1314" stroke="#110a0b" d="M105 625l60 15v12L280 690q30 15 50 50l50 20 95 5v32H400Q330 790 315 765 290 730 270 720L105 685zM205 652l60 10 25 35-82-20z"/>
                        <path fill="#251d1e" stroke="#1a0f10" d="M125 697q40 0 165 55 10 10 0 22-110-20-152-52z"/>
                        <path fill="none" stroke="#484243" d="M130 650v40M150 654v40M175 662v36M200 670v36M225 678v35M250 688v35M275 705v30M300 720v40M340 765v25M370 770v28M400 770v28M430 770v28M460 770v28"/>
                        <path d="M330 690q40-15 70 0v30q-40 15-70 0z" fill="#b02c2f" stroke="#f62b2b"/><ellipse cx="369" cy="711" rx="13" ry="17" fill="#d8d2ad" stroke="#f2ecc0" stroke-width="2"/>
                        <path fill="none" stroke="#f62b2b" stroke-width="2" d="M105 600q50 50 170 50 120 20 220 15M105 640q60 10 60-15M240 590l40 5 45 40M240 590l-10 35M90 635q60 20 80 0M475 800h35"/>

                        <!-- арки и порог -->
                        <path fill="none" stroke="#130c0d" stroke-width="4" d="M500 665q60-70 150-78 60 0 90 50l22 95"/>
                        <path fill="#191112" stroke="#130c0d" d="M760 735l25-3 405-83 40-17 25-45 15-70q50-80 120-68l50 45 5 122-12-90q-30-55-85-50-48 10-60 80l-3 125h-30l-20-12-400 75-60 40z"/>
                        <path fill="none" stroke="#f62b2b" d="M790 752l400-82 70-35M520 650q60-50 130-48 50 0 75 50 30 60 35 85M800 765l400-80M770 750l-70 40M700 780l60-15"/>
                        <path fill="none" stroke="#5a5051" d="M860 722v20M900 715v20M940 708v20M980 700v20M1020 692v20M1060 684v20M1100 676v20M1140 668v20M1180 660v20"/>
                        <path fill="none" stroke="#f62b2b" stroke-width="2" d="M1310 490q60-30 120 40v60M1320 480l80 30M1360 460l60 50M1340 500l80-20M585 630v30M595 630v30"/>

                        <!-- колёса -->
                        <path fill="url(#tire)" d="M590 637q-60-10-90 50-23 40-23 100 0 90 50 116l65 32q115 10 115-130 0-95-45-135-30-32-72-33z"/>
                        <path fill="none" stroke="#111" stroke-width="1.500" d="M550 645q-90 120-12 257M580 645q-100 110-20 270M520 660q-60 110 0 210"/>
                        <ellipse cx="628" cy="805" rx="93" ry="132" fill="#2e2829" stroke="#171111" stroke-width="1.500"/>
                        <ellipse cx="628" cy="805" rx="88" ry="125" fill="none" stroke="#4a4445"/>
                        <ellipse cx="621" cy="796" rx="83" ry="118" fill="#d6d6d6" stroke="#eee"/>
                        <path fill="url(#tire)" d="M1340 503q-50 5-65 75l-10 100-38 12q20 50 120 59 83-10 83-124-5-115-90-122z"/>
                        <ellipse cx="1353" cy="626" rx="76" ry="123" fill="#2e2829" stroke="#171111" stroke-width="1.500"/>
                        <ellipse cx="1353" cy="626" rx="70" ry="115" fill="none" stroke="#4a4445"/>
                        <ellipse cx="1346" cy="625" rx="59" ry="104" fill="#d6d6d6" stroke="#eee"/>
                        <g fill="none" stroke="#8d8d8d" stroke-width="2" stroke-dasharray="1 3"><ellipse cx="621" cy="796" rx="70" ry="100"/><ellipse cx="621" cy="796" rx="58" ry="82"/><ellipse cx="621" cy="796" rx="40" ry="58"/><ellipse cx="1346" cy="625" rx="49" ry="86"/><ellipse cx="1346" cy="625" rx="34" ry="60"/></g>
                        <path fill="none" stroke="#dedede" stroke-width="5" d="M621 796l-40-85M621 796l45-90M621 796l-70 40M621 796l75 10M621 796l5 110M1346 625l-28-75M1346 625l32-70M1346 625l-50 30M1346 625l50 10M1346 625l2 95"/>
                        <path fill="none" stroke="#777" stroke-width="3" d="M575 895l20 4M665 870l12-20M552 745l10-15M1318 705l10 4M1380 690l8-14M1312 555l8-12"/>
                        <g fill="none" stroke="#f62b2b">
                            <path stroke-width="2" d="M598 730l-3 45-14 14M600 825q30 50 25 110M620 793l90-25M640 803l70-15M720 750l40-8M580 785l25-5M1325 558l40-8M1325 625l30-10M1325 610l20 15M1337 655q20 40 15 95"/>
                            <path stroke-width="1.500" d="M620 795l135 55M1335 625l155 38M1320 635l30-10"/>
                        </g>
                        <g fill="none" stroke="#dadada" stroke-width="1.500"><ellipse cx="740" cy="842" rx="25" ry="36"/><ellipse cx="740" cy="842" rx="13" ry="17"/><ellipse cx="1488" cy="664" rx="18" ry="31"/></g>
                    </g>

                    <g transform="translate(340 400) scale(.3333 .338)" fill="none">
                        <path stroke="#f62b2b" stroke-width="1.500" d="M806 740Q745 800 743 930 755 1105 925 1107 980 1102 1022 1078M765 865q60 20 85 0M762 910q10 40 20 0M890 1090l20 14"/>
                        <path d="M827 105l37 1425" stroke="#1b1718" stroke-width="1.500"/>
                    </g>

                    <g stroke="#666a6f" fill="none"><path d="M111 898v37l29-4M111 935l23 6"/></g>
                    <g class="axis"><text x="113" y="900">z</text><text x="142" y="931">y</text><text x="138" y="942">x</text></g>
                </svg>
                <button class="view-title">Perspective<span><svg><use href="#tri-down"/></svg></span></button>
            </div>
            <div class="view-tabs">
                <button class="active">Perspective</button><button>Top</button><button>Front</button><button>Right</button><button class="add" aria-label="新增视图"><svg viewBox="0 0 14 14"><path d="M5.500 1.500h3v4h4v3h-4v4h-3v-4h-4v-3h4z" fill="#fff" stroke="#666"/></svg></button>
            </div>
        </section>

        <aside class="panel">
            <div class="panel-tabs">
                <button class="active" aria-label="材质"><svg viewBox="0 0 24 24"><path d="M2 19l4-7 4 5-4 6-4 1z" fill="#fff" stroke="#444"/><path d="M8 12l5-6 5 4-5 7z" fill="#e65a1c" stroke="#833"/><path d="M6 14l5-6 2 6-5 5z" fill="#ddd" stroke="#444"/><path d="M14 5l5-3 3 3-4 6z" fill="#ddd" stroke="#444"/></svg></button>
                <button aria-label="文件夹"><svg><use href="#folder"/></svg></button>
                <button aria-label="说明"><svg viewBox="0 0 24 24"><path d="M2 2h20v20H2z" fill="#fff" stroke="#333"/><path d="M2 2h20v4H2z" fill="#345aa8"/><circle cx="12" cy="13" r="7" fill="url(#help)"/><path d="M9.500 12q0-3 2.500-3t2.500 2q0 1-2.500 3v1" fill="none" stroke="#fff" stroke-width="2"/></svg></button>
                <button aria-label="图层"><svg><use href="#layers"/></svg></button>
                <button aria-label="显示"><svg><use href="#wheel"/></svg></button>
                <button class="panel-gear" aria-label="选项"><svg><use href="#gear"/></svg></button>
            </div>
            <div class="panel-body">
                <div class="panel-nav">
                    <button aria-label="后退"><svg viewBox="0 0 20 20"><path d="M10 3l-7 7 7 7M3 10h15" fill="none" stroke="#9a9a9c" stroke-width="4"/></svg></button>
                    <button aria-label="前进"><svg viewBox="0 0 20 20"><path d="M10 3l7 7-7 7M17 10H2" fill="none" stroke="#9a9a9c" stroke-width="4"/></svg></button>
                    <div class="panel-search">
                        <button aria-label="类型"><svg><use href="#wrench"/></svg><svg class="play" viewBox="0 0 6 10"><path d="M0 0l6 5-6 5z"/></svg></button>
                        <button aria-label="搜索"><svg viewBox="0 0 24 24"><circle cx="11" cy="10" r="7" fill="none" stroke="#6b6b6b" stroke-width="3"/><path d="M16 15l6 7" stroke="#6b6b6b" stroke-width="3"/></svg></button>
                    </div>
                    <button aria-label="菜单"><svg viewBox="0 0 20 20"><path d="M2 3h16M2 10h16M2 17h16" stroke="#484848" stroke-width="3" stroke-linecap="round"/></svg></button>
                    <button class="big" aria-label="说明"><svg><use href="#ask"/></svg></button>
                </div>
                <div class="materials">
                    <div class="material-list">
                        <button class="material selected"><svg class="dark" viewBox="0 0 46 46"><use href="#thumb"/><path d="M11 14q8-8 16-4l-8 3 6 22q-8-2-10-8zM12 32l8 4 2 8h-8z" fill="#222"/><path d="M14 16l9 16M18 13l-4 8" stroke="#eee" stroke-width="2"/></svg><span>74F86D52035627014...</span></button>
                        <button class="material"><svg class="mid"><use href="#thumb"/></svg><span>灰色玻璃</span></button>
                        <button class="material"><svg class="light"><use href="#thumb"/></svg><span>自定义</span></button>
                    </div>
                    <div class="scroll"><svg><use href="#up"/></svg><i></i><svg><use href="#down"/></svg></div>
                </div>
                <div class="splitter"><svg><use href="#down"/></svg><svg><use href="#down"/></svg></div>
                <div class="details">
                    <div class="details-content">
                        <h2>名称</h2>
                        <input class="name" type="text" value="74F86D52035627014FC9" aria-label="名称">
                        <h2>类型</h2>
                        <div class="type">
                            <svg class="type-icon"><use href="#wrench"/></svg>
                            <select aria-label="类型"><option>自定义</option></select>
                            <svg class="type-arrow" viewBox="0 0 10 10"><path d="M0 3l5 5 5-5" fill="none" stroke="#444"/></svg>
                        </div>
                        <h2 class="fold"><svg><use href="#down"/></svg>自定义设置</h2>
                        <div class="row color-row">
                            <span>颜色:</span><button class="swatch wide" aria-label="颜色"><svg viewBox="0 0 12 12"><rect width="12" height="12" fill="#000"/><path d="M6 1h5v5H6zM1 6h5v5H1z" fill="#fff"/></svg></button><button class="drop" aria-label="颜色选项"><svg><use href="#tri-down"/></svg></button>
                        </div>
                        <div class="row">
                            <label for="gloss">光泽:</label><div class="slider"><input id="gloss" type="range" value="0"><p><span>0%</span><span>100</span></p></div><button class="swatch" aria-label="光泽颜色"></button><button class="drop" aria-label="光泽选项"><svg><use href="#tri-down"/></svg></button>
                        </div>
                        <div class="row">
                            <label for="reflect">反射:</label><div class="slider"><input id="reflect" type="range" value="0"><p><span>0%</span><span>100</span></p></div><button class="swatch" aria-label="反射颜色"></button><button class="drop" aria-label="反射选项"><svg><use href="#tri-down"/></svg></button>
                        </div>
                        <div class="row">
                            <label for="alpha">透明:</label><div class="slider"><input id="alpha" type="range" value="0"><p><span>0%</span><span>100</span></p></div><button class="swatch" aria-label="透明颜色"></button><button class="drop" aria-label="透明选项"><svg><use href="#tri-down"/></svg></button>
                        </div>
                        <div class="ior">
                            <label for="ior">折射率</label>
                            <div class="spin"><input id="ior" type="text" value="1.00"><div><button aria-label="增加"><svg><use href="#tri-up"/></svg></button><button aria-label="减少"><svg><use href="#tri-down"/></svg></button></div></div>
                        </div>
                        <h2 class="fold"><svg><use href="#down"/></svg>贴图</h2>
                        <p class="map-name">颜色</p>
                        <div class="map-row">
                            <input type="checkbox" id="map" checked><label for="map"><svg viewBox="0 0 18 18"><path d="M1 1h16v16H1z" fill="none" stroke="#333" stroke-dasharray="3 2"/><path d="M4 4h10v10H4z" fill="#ddd"/></svg>7</label><button class="dots" aria-label="浏览">···</button>
                            <div class="spin"><input type="text" value="100%" aria-label="颜色数量"><div><button aria-label="增加数量"><svg><use href="#tri-up"/></svg></button><button aria-label="减少数量"><svg><use href="#tri-down"/></svg></button></div></div>
                        </div>
                        <div class="brand"><div><b>学犀牛</b><small>xuexiniu.com</small></div><span>中文网</span></div>
                    </div>
                    <div class="scroll"><svg><use href="#up"/></svg><i></i><svg><use href="#down"/></svg></div>
                </div>
            </div>
        </aside>
    </main>

    <footer class="status">
        <span>工作平面</span><span class="coord">x 392.247</span><span class="coord">y 238.573</span><span class="coord">z 0.000</span><span class="coord">厘米</span><span class="layer"><i></i>预设值</span>
        <button>锁定格点</button><button>正交</button><button class="on">平面模式</button><button>物件锁点</button><button>智慧轨迹</button><button class="on">操作轴</button><button>记录建构历史</button><button>过滤器</button><span class="memory">可用的物理内存: 2602 MB</span>
    </footer>
</body>
</html>
```
FILE: styles.css
```css
* {
    box-sizing: border-box;
}
body {
    font-family: "Noto Sans", "Noto Sans CJK SC", sans-serif;
    font-size: 15px;
    line-height: 20px;
    color: #000;
    background-color: #eaebef;
    display: flex;
    flex-direction: column;
    height: 100vh;
    margin: 0;
    overflow: hidden;
}
button, input, select {
    font: inherit;
    color: inherit;
    padding: 0;
    margin: 0;
    border: 0;
    background: none;
    border-radius: 0;
}
button {
    display: flex;
    align-items: center;
    justify-content: center;
    white-space: nowrap;
}
p, h1, h2 {
    margin: 0;
    font-weight: normal;
}
.defs {
    position: absolute;
}

/* заголовок и меню */
.titlebar {
    display: flex;
    align-items: center;
    height: 28px;
    padding: 0 3px 0 2px;
    background-color: #fff;
    color: #999;
}
.logo {
    width: 20px;
    height: 20px;
}
.titlebar h1 {
    flex: 1;
    font-size: 15px;
    margin-left: 5px;
}
.window-buttons {
    display: flex;
}
.window-buttons button {
    width: 59px;
    height: 28px;
}
.window-buttons svg {
    width: 14px;
    height: 14px;
    fill: none;
    stroke: #888;
}
.menu {
    display: flex;
    gap: 16px;
    height: 24px;
    padding: 3px 7px;
    background-color: #fff;
}
.menu a {
    color: #666;
    text-decoration: none;
}

/* командная строка */
.command {
    margin: 5px 1px 3px 3px;
    padding-left: 4px;
    border-left: 3px double #c5cadc;
}
.history {
    display: flex;
    height: 38px;
    background-color: #fff;
    border-bottom: 1px solid #b9c2dc;
}
.history-text {
    flex: 1;
    display: flex;
    flex-direction: column;
    justify-content: flex-end;
    overflow: hidden;
}
.history p {
    line-height: 25px;
}
.history-scroll {
    display: flex;
    flex-direction: column;
    justify-content: space-around;
    align-items: center;
    width: 20px;
    background-color: #f0f0f0;
}
.history-scroll svg {
    width: 8px;
    height: 8px;
}
.prompt {
    display: flex;
    height: 23px;
    line-height: 18px;
    background-color: #fff;
    font-weight: bold;
}
.prompt input {
    flex: 1;
}
.prompt-scroll {
    display: flex;
    flex-direction: column;
    gap: 1px;
    width: 20px;
    padding: 1px;
    background-color: #f0f0f0;
}
.prompt-scroll button {
    height: 10px;
    border: 1px solid #aaa;
}
.prompt-scroll svg {
    width: 8px;
    height: 8px;
}

/* вкладки и панель инструментов */
.toolbars {
    border-top: 1px solid #d3d8e6;
    padding-top: 5px;
}
.tabs {
    display: flex;
    height: 29px;
    margin-left: 3px;
    padding-left: 6px;
    border-bottom: 1px solid #bfc7dc;
}
.tab {
    position: relative;
    height: 28px;
    padding: 0 18px 2px 18px;
    font-size: 16px;
    background-color: #d6d6d6;
    border-top: 1px solid #bfc7dc;
    border-right: 1px solid #bfc7dc;
    border-radius: 0 4px 0 0;
}
.tab::before {
    content: "";
    position: absolute;
    z-index: 0;
    left: -7px;
    top: -1px;
    width: 18px;
    height: 28px;
    background-color: #d6d6d6;
    border-left: 1px solid #bfc7dc;
    border-top: 1px solid #bfc7dc;
    transform: skewX(-37deg);
}
.tab.active {
    height: 29px;
    background-color: #eaebef;
    border-left: 1px solid #bfc7dc;
    border-radius: 8px 4px 0 0;
}
.tab.active::before {
    display: none;
}
.tab:nth-child(2)::before {
    left: 0;
    transform: none;
    border-left: 0;
}
.tabs-gear {
    margin-left: auto;
    padding-right: 1px;
}
.tabs-gear svg {
    width: 16px;
    height: 16px;
}
.toolbar {
    display: flex;
    height: 38px;
    padding: 1px 8px 0;
}
.tool {
    position: relative;
    width: 28px;
    height: 28px;
}
.tool svg {
    width: 24px;
    height: 24px;
}
.tool.more::after {
    content: "";
    position: absolute;
    right: 0;
    bottom: 0;
    border: 3px solid transparent;
    border-right-color: #666;
    border-bottom-color: #666;
}

/* рабочая область */
.workspace {
    flex: 1;
    display: flex;
    min-height: 0;
}
.side-tools {
    display: grid;
    grid-template-columns: 28px 28px;
    grid-auto-rows: 28px;
    align-content: start;
    width: 66px;
    padding: 9px 0 0 1px;
    background: linear-gradient(#c5cee4, #c5cee4) 3px 4px / 57px 1px no-repeat, linear-gradient(#c5cee4, #c5cee4) 3px 6px / 57px 1px no-repeat;
}
.side-tools .tool:nth-child(-n+3) svg {
    width: 20px;
    height: 20px;
}
.view {
    flex: 1;
    display: flex;
    flex-direction: column;
    min-width: 0;
}
.viewport {
    position: relative;
    flex: 1;
    min-height: 0;
    background-color: #9da3ab;
    border: 1px solid #b9c3da;
}
.scene {
    display: block;
    width: 100%;
    height: 100%;
}
.scene path, .scene ellipse, .scene rect {
    vector-effect: non-scaling-stroke;
}
.axis {
    font-size: 16px;
    fill: #666a6f;
}
.view-title {
    position: absolute;
    left: 0;
    top: 0;
    height: 24px;
    padding: 0 0 2px 9px;
    font-size: 16px;
    font-weight: bold;
    background-color: #8ba5c1;
}
.view-title span {
    display: flex;
    align-items: center;
    height: 20px;
    margin-left: 9px;
    padding: 0 2px;
    border-left: 1px solid #222;
}
.view-title svg {
    width: 8px;
    height: 8px;
}
.view-tabs {
    display: flex;
    height: 29px;
}
.view-tabs button {
    height: 27px;
    padding: 0 6px 0 15px;
    font-size: 16px;
    background-color: #d6d6d6;
    border: 1px solid #c3cadd;
    border-left: 0;
    border-radius: 0 0 4px 0;
    clip-path: polygon(0 0, 100% 0, 100% 100%, 10px 100%, 0 50%);
}
.view-tabs .active, .view-tabs .add {
    background-color: #eaebef;
}
.view-tabs .add {
    width: 40px;
    padding: 0 0 0 4px;
}
.view-tabs .add svg {
    width: 14px;
    height: 14px;
}

/* правая панель */
.panel {
    display: flex;
    flex-direction: column;
    width: 261px;
    padding: 9px 0 3px 7px;
    background: linear-gradient(#c5cee4, #c5cee4) 7px 4px / 100% 1px no-repeat, linear-gradient(#c5cee4, #c5cee4) 7px 6px / 100% 1px no-repeat;
}
.panel-tabs {
    display: flex;
    height: 30px;
}
.panel-tabs button {
    position: relative;
    width: 45px;
    justify-content: flex-start;
    padding-left: 5px;
    background-color: #d6d6d6;
    border-top: 1px solid #bfc7dc;
    border-left: 1px solid #bfc7dc;
    border-radius: 5px 0 0 0;
}
.panel-tabs button::after {
    content: "";
    position: absolute;
    z-index: 1;
    right: -8px;
    top: -1px;
    width: 24px;
    height: 30px;
    background-color: #d6d6d6;
    border-right: 1px solid #bfc7dc;
    border-top: 1px solid #bfc7dc;
    transform: skewX(43deg);
}
.panel-tabs svg {
    position: relative;
    z-index: 2;
    width: 20px;
    height: 20px;
}
.panel-tabs .active, .panel-tabs .active::after {
    background-color: #f7f7fa;
}
.panel-tabs .panel-gear {
    z-index: 2;
    width: 20px;
    margin-left: auto;
    padding: 0;
    color: #aaa;
    background: none;
    border: 0;
}
.panel-tabs .panel-gear::after {
    display: none;
}
.panel-body {
    flex: 1;
    display: flex;
    flex-direction: column;
    min-height: 0;
    background-color: #f7f7fa;
    border: 1px solid #bfc7dc;
}
.panel-nav {
    display: flex;
    align-items: center;
    height: 52px;
    padding: 0 9px 0 12px;
    border-bottom: 1px solid #9aa8be;
}
.panel-nav > button + button {
    margin: 0 15px 0 27px;
}
.panel-nav svg {
    width: 20px;
    height: 20px;
}
.panel-nav > .panel-search + button {
    margin: 0 auto 0 13px;
}
.panel-nav > button.big {
    margin: 0;
}
.panel-nav .big svg {
    width: 28px;
    height: 28px;
}
.panel-search {
    display: flex;
    height: 45px;
    background-color: #fff;
    border: 1px solid #9aa8b8;
}
.panel-search button {
    width: 27px;
}
.panel-search button:first-child {
    width: 37px;
    gap: 6px;
    background-color: #f0f0f0;
    border-right: 1px solid #9aa8b8;
}
.panel-search .play {
    width: 5px;
    height: 10px;
}
.materials {
    display: flex;
    height: 157px;
    background-color: #fff;
    border-bottom: 1px solid #9aa8be;
}
.material-list {
    flex: 1;
    display: flex;
    flex-direction: column;
    gap: 3px;
    min-width: 0;
    padding: 2px 3px 3px 2px;
}
.material {
    position: relative;
    flex: 1;
    justify-content: flex-start;
    gap: 7px;
    overflow: hidden;
    font-size: 16px;
    border: 1px solid #777;
}
.material.selected {
    border: 2px solid #0078d7;
}
.material svg {
    width: 46px;
    height: 46px;
    flex: none;
}
.material::before, .material::after {
    content: "";
    position: absolute;
    right: -7px;
    width: 14px;
    height: 14px;
    border: 1px solid #777;
    transform: rotate(45deg);
    background-color: #fff;
}
.material::before {
    top: -7px;
}
.material::after {
    bottom: -7px;
}
.dark {
    color: #e2e2e2;
}
.mid {
    color: #777;
}
.light {
    color: #bdbdbd;
}
.scroll {
    display: flex;
    flex-direction: column;
    align-items: center;
    width: 20px;
    padding: 6px 0;
    background-color: #f0f0f0;
}
.scroll svg {
    width: 10px;
    height: 10px;
}
.scroll i {
    width: 20px;
    height: 61%;
    margin: 5px 0 auto;
    background-color: #cdcdcd;
}
.splitter {
    display: flex;
    justify-content: center;
    gap: 3px;
    height: 6px;
    background-color: #efeff1;
}
.splitter svg {
    width: 8px;
    height: 8px;
}
.details {
    flex: 1;
    display: flex;
    min-height: 0;
}
.details-content {
    position: relative;
    flex: 1;
    min-width: 0;
    overflow: hidden;
    padding: 7px 6px 0 8px;
}
.details h2 {
    display: flex;
    align-items: center;
    height: 28px;
    font-size: 19px;
}
.details h2::after {
    content: "";
    flex: 1;
    height: 1px;
    margin-left: 6px;
    background-color: #bcbcbc;
}
.details .name {
    display: block;
    width: calc(100% - 25px);
    height: 38px;
    margin: 8px 8px 16px 17px;
    padding: 0 5px;
    background-color: #fff;
    border: 1px solid #ccc;
}
.type {
    position: relative;
    margin: 18px 8px 32px 19px;
}
.type select {
    display: block;
    width: 100%;
    height: 29px;
    padding-left: 26px;
    background-color: #e1e1e1;
    border: 1px solid #adadad;
    appearance: none;
}
.type-icon, .type-arrow {
    position: absolute;
    left: 3px;
    top: 4px;
    width: 20px;
    height: 20px;
}
.type-arrow {
    left: auto;
    right: 5px;
    top: 9px;
    width: 10px;
    height: 10px;
}
.fold svg {
    width: 11px;
    height: 11px;
    margin-right: 8px;
}
.row {
    display: flex;
    align-items: center;
    height: 30px;
    margin: 0 8px 10px 19px;
}
.row > label, .row > span {
    width: 40px;
}
.color-row {
    margin-top: 13px;
    margin-bottom: 18px;
}
.swatch {
    width: 30px;
    height: 28px;
    background-color: #fff;
    border: 1px solid #888;
}
.swatch.wide {
    flex: 1;
    align-items: flex-start;
    justify-content: flex-start;
    padding: 2px;
}
.swatch svg {
    width: 12px;
    height: 12px;
}
.drop {
    width: 19px;
    height: 30px;
    background-color: #f0f0f0;
}
.drop svg {
    width: 8px;
    height: 8px;
}
.slider {
    flex: 1;
    align-self: flex-start;
    min-width: 0;
    padding-right: 4px;
}
.slider input {
    display: block;
    appearance: none;
    width: 87px;
    height: 13px;
    margin-left: 2px;
    background: linear-gradient(#777, #777) 6px 0 / 79px 1px no-repeat, linear-gradient(#777, #777) 84px 0 / 1px 5px no-repeat;
}
.slider input::-webkit-slider-thumb {
    appearance: none;
    width: 13px;
    height: 11px;
    background: url("data:image/svg+xml,%3Csvg xmlns='http://www.w3.org/2000/svg' viewBox='0 0 13 11'%3E%3Cpath d='M1 10L6.500 1 12 10z' fill='white' stroke='%23999'/%3E%3C/svg%3E");
}
.slider p {
    display: flex;
    justify-content: space-between;
    font-size: 11px;
    color: #777;
}
.ior {
    display: flex;
    align-items: center;
    margin: -3px 0 29px 48px;
}
.ior label {
    width: 38px;
    overflow: hidden;
    white-space: nowrap;
}
.spin {
    display: flex;
    width: 70px;
    height: 30px;
    font-size: 16px;
    background-color: #fff;
    border: 1px solid #aaa;
}
.spin input {
    flex: 1;
    min-width: 0;
    padding-left: 6px;
}
.spin > div {
    display: flex;
    flex-direction: column;
    width: 15px;
    border-left: 1px solid #aaa;
}
.spin button {
    flex: 1;
}
.spin button + button {
    border-top: 1px solid #aaa;
}
.spin svg {
    width: 8px;
    height: 8px;
    fill: #555;
}
.map-name {
    margin: 16px 0 4px 21px;
}
.map-row {
    display: flex;
    margin: 0 8px 0 29px;
}
.map-row > input {
    appearance: none;
    width: 16px;
    height: 16px;
    margin-top: 6px;
    background-color: #fff;
    border: 1px solid #333;
}
.map-row > input:checked {
    background: url("data:image/svg+xml,%3Csvg xmlns='http://www.w3.org/2000/svg' viewBox='0 0 14 14'%3E%3Cpath d='M2 7l4 4 7-8' fill='none' stroke='%23222' stroke-width='1.500'/%3E%3C/svg%3E");
}
.map-row label {
    display: flex;
    align-items: center;
    gap: 6px;
    margin: 0 auto 0 7px;
}
.map-row label svg {
    width: 18px;
    height: 18px;
}
.dots {
    margin-right: 16px;
    font-weight: bold;
}
.brand {
    position: absolute;
    right: 11px;
    bottom: 9px;
    display: flex;
    align-items: center;
    gap: 3px;
    padding: 5px 7px 3px;
    border-radius: 4px;
    background-color: rgba(242, 242, 245, 0.9);
    box-shadow: 0 0 4px #ccc;
}
.brand b {
    display: block;
    font-family: "Noto Sans CJK SC", sans-serif;
    font-weight: 900;
    font-size: 21px;
    line-height: 20px;
}
.brand small {
    display: block;
    font-size: 10px;
    font-weight: 500;
    line-height: 11px;
}
.brand span {
    width: 18px;
    padding: 0 4px;
    font-size: 10px;
    font-weight: bold;
    line-height: 10px;
    color: #fff;
    background-color: #d0384e;
}

/* строка состояния */
.status {
    display: flex;
    height: 22px;
    border-top: 1px solid #b9c2dc;
}
.status > * {
    padding: 0 7px;
    border-right: 1px solid #bfc7dc;
    white-space: nowrap;
}
.status > button {
    padding: 0 8px 0 7px;
}
.status .coord {
    width: 108px;
    text-align: center;
}
.status .layer {
    display: flex;
    align-items: center;
    gap: 4px;
    width: 208px;
    padding: 0 4px;
}
.status .layer i {
    width: 13px;
    height: 14px;
    background-color: #170f10;
}
.status .on {
    font-weight: bold;
    background-color: #e2f2fc;
}
.status .memory {
    flex: 1;
    margin-right: 7px;
    padding: 0 1px;
}
```
